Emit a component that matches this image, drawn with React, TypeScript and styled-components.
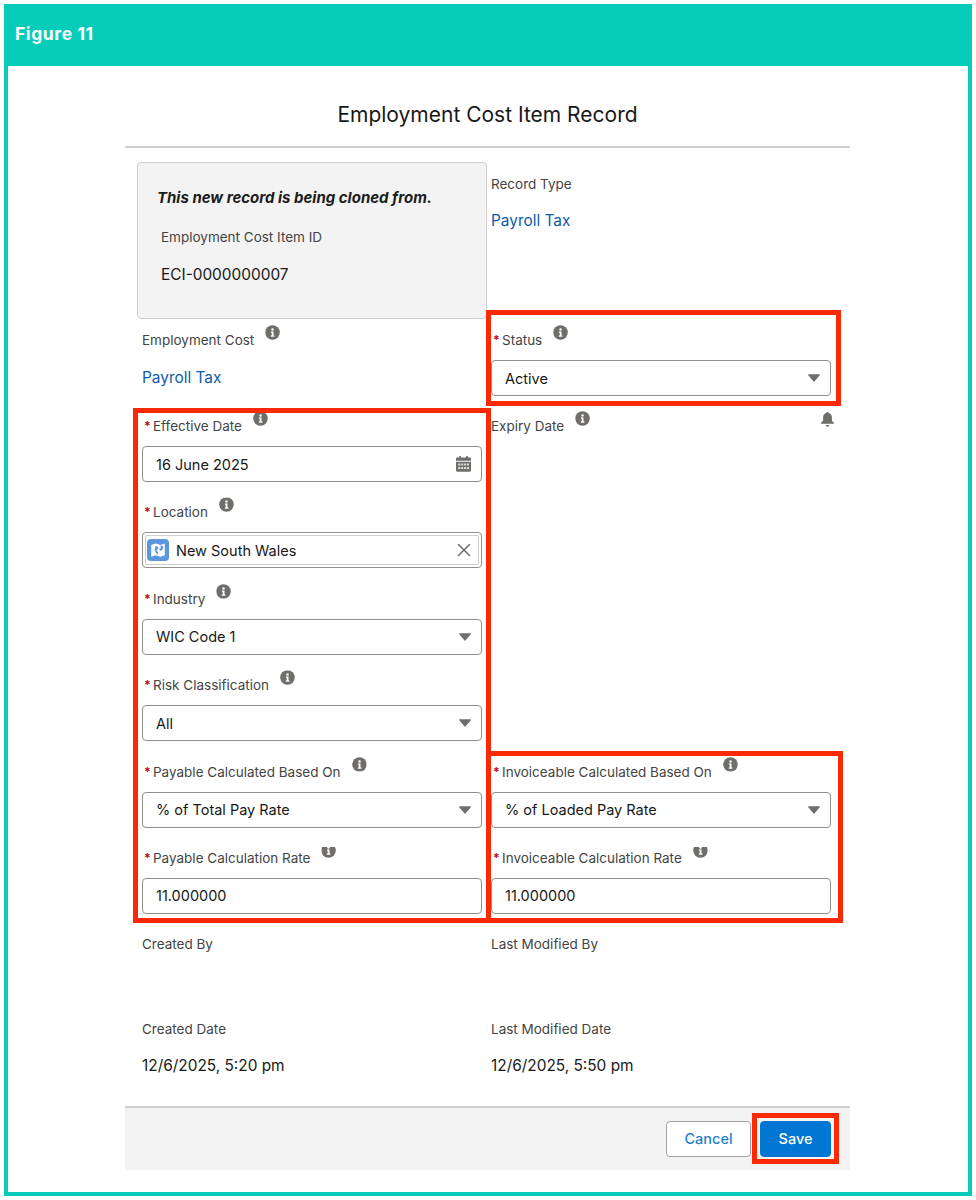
import React from 'react';
import styled, { createGlobalStyle } from 'styled-components';

const GlobalStyle = createGlobalStyle`
  html, body {
    margin: 0;
    background: #fff;
  }
  body {
    font-family: Inter, "Liberation Sans", sans-serif;
    color: #181818;
  }
`;

const Frame = styled.div`
  box-sizing: border-box;
  width: 968px;
  height: 1192px;
  margin: 4px;
  border: 4px solid #05cdb9;
  background: #fff;
`;

const Banner = styled.header`
  display: flex;
  align-items: center;
  height: 58px;
  padding: 0 0 8px 7px;
  box-sizing: border-box;
  background: #05cdb9;
  color: #fff;
  font-size: 17.5px;
  letter-spacing: 0.6px;
  font-weight: 700;
`;

const Dialog = styled.section`
  width: 725px;
  margin-left: 117px;
`;

const Title = styled.h1`
  margin: 0;
  padding: 34px 0 16px;
  border-bottom: 2px solid #d0d0d0;
  text-align: center;
  font-size: 21px;
  line-height: 30px;
  font-weight: 400;
  color: #181818;
`;

const Form = styled.div`
  display: grid;
  grid-template-columns: 350px 350px;
  padding-left: 12px;
`;

const Cell = styled.div<{ $side: 'left' | 'right'; $height?: number; $top?: number }>`
  display: flex;
  flex-direction: column;
  justify-content: space-between;
  box-sizing: border-box;
  padding: ${(p) => p.$top ?? 0}px ${(p) => (p.$side === 'left' ? '5px 0 5px' : '6px 0 4px')};
  height: ${(p) => (p.$height ? `${p.$height}px` : 'auto')};
`;

const CloneBox = styled.div`
  box-sizing: border-box;
  width: 350px;
  height: 157px;
  margin: 14px 0 0 -5px;
  padding: 25px 0 0 19px;
  border: 1px solid #cfcfcf;
  border-radius: 4px;
  background: #f3f3f3;
`;

const CloneNote = styled.div`
  font-size: 15px;
  line-height: 20px;
  font-weight: 700;
  font-style: italic;
  color: #1c1c1c;
`;

const CloneId = styled.div`
  margin: 19px 0 0 4px;
`;

const ReadOnly = styled.div<{ $top?: number }>`
  padding-top: ${(p) => p.$top ?? 0}px;
`;

const Label = styled.div`
  display: flex;
  align-items: flex-start;
  height: 20px;
  font-size: 13.5px;
  line-height: 20px;
  color: #444;
`;

const Required = styled.span`
  width: 9px;
  margin-left: 2px;
  color: #ba0517;
  font-weight: 700;
  font-size: 12px;
`;

const Value = styled.div<{ $gap?: number }>`
  margin-top: ${(p) => p.$gap ?? 17}px;
  font-size: 15.4px;
  line-height: 20px;
  color: #181818;
`;

const LinkValue = styled(Value)`
  color: #0b5cab;
`;

const InfoWrap = styled.span<{ $clip: number }>`
  display: inline-flex;
  width: 15px;
  height: 15px;
  margin: -5px 0 0 11px;
  clip-path: inset(${(p) => p.$clip}px 0 0 0);
`;

const Fields = styled.div`
  display: flex;
  flex-direction: column;
  gap: 20.4px;
`;

const Highlight = styled.div<{ $t: number; $r: number; $b: number; $l: number }>`
  position: relative;

  &::after {
    content: '';
    position: absolute;
    top: -${(p) => p.$t}px;
    right: -${(p) => p.$r}px;
    bottom: -${(p) => p.$b}px;
    left: -${(p) => p.$l}px;
    border: 5.5px solid #fb2a05;
    pointer-events: none;
  }
`;

const Control = styled.div`
  box-sizing: border-box;
  display: flex;
  align-items: center;
  justify-content: space-between;
  width: 340px;
  height: 36px;
  margin-top: 10px;
  padding: 0 10px 0 13px;
  border: 1px solid #8f8f8f;
  border-radius: 4px;
  background: #fff;
  font-size: 14.5px;
  color: #181818;
`;

const LookupControl = styled(Control)`
  padding: 2px;
`;

const LookupInner = styled.div`
  box-sizing: border-box;
  display: flex;
  align-items: center;
  width: 100%;
  height: 100%;
  padding: 0 7px 0 1px;
  border: 1px solid #cfcfcf;
  border-radius: 2px;
`;

const LookupText = styled.span`
  flex: 1;
  margin-left: 7px;
`;

const BellRow = styled.div`
  display: flex;
  align-items: flex-start;
  height: 20px;
`;

const BellWrap = styled.span`
  display: inline-flex;
  margin: -4px -4px 0 auto;
`;

const Footer = styled.footer`
  box-sizing: border-box;
  display: flex;
  align-items: center;
  justify-content: flex-end;
  gap: 9px;
  height: 64px;
  margin-top: 30px;
  padding-right: 19px;
  border-top: 2px solid #cfcfcf;
  background: #f3f3f3;
`;

const Button = styled.button<{ $primary?: boolean }>`
  box-sizing: border-box;
  height: 36px;
  width: ${(p) => (p.$primary ? '71px' : '85px')};
  padding: 0;
  border: 1px solid ${(p) => (p.$primary ? '#0176d3' : '#a3a3a3')};
  border-radius: 4px;
  background: ${(p) => (p.$primary ? '#0176d3' : '#fff')};
  color: ${(p) => (p.$primary ? '#fff' : '#1f7fcb')};
  font-family: inherit;
  font-size: 14.5px;
  font-weight: 500;
`;

function InfoIcon({ clip = 0 }: { clip?: number }) {
  return (
    <InfoWrap $clip={clip}>
      <svg width="15" height="15" viewBox="0 0 15 15">
        <circle cx="7.5" cy="7.5" r="7.3" fill="#706e6b" />
        <circle cx="7.5" cy="4.4" r="1.25" fill="#fff" />
        <path d="M5.9 6.5h2.6v4h.9v1.2H5.8v-1.2h.9V7.7h-.8z" fill="#fff" />
      </svg>
    </InfoWrap>
  );
}

function Caret() {
  return (
    <svg width="12" height="8" viewBox="0 0 12 8">
      <path d="M.6.3h10.8c.5 0 .7.5.4.9L6.4 7.4c-.2.3-.6.3-.8 0L.2 1.2C-.1.8.1.3.6.3z" fill="#706e6b" />
    </svg>
  );
}

function CalendarIcon() {
  return (
    <svg width="15" height="16" viewBox="0 0 15 16">
      <rect x="3" y="0" width="2" height="3" rx=".8" fill="#706e6b" />
      <rect x="10" y="0" width="2" height="3" rx=".8" fill="#706e6b" />
      <path d="M1.2 1.6h12.6c.7 0 1.2.5 1.2 1.2v2H0v-2c0-.7.5-1.2 1.2-1.2z" fill="#706e6b" />
      <path d="M0 5.8h15v8.8c0 .7-.5 1.2-1.2 1.2H1.2C.5 15.800 0 15.300 0 14.600z" fill="#706e6b" />
      <path
        d="M2.200 7.500h2.200v2H2.200zM5.200 7.500h2v2h-2zM8 7.500h2v2H8zM10.800 7.500H13v2h-2.200zM2.200 11h2.200v2H2.200zM5.200 11h2v2h-2zM8 11h2v2H8zM10.800 11H13v2h-2.200z"
        fill="#fff"
        opacity=".75"
      />
    </svg>
  );
}

function LocationBadge() {
  return (
    <svg width="22" height="22" viewBox="0 0 22 22">
      <rect width="22" height="22" rx="4" fill="#5b97de" />
      <path d="M4.200 6 8.600 4.500l4.800 1.500 4.400-1.500v11.800l-4.400 1.500-4.800-1.500-4.400 1.500z" fill="#fff" />
      <path
        d="M8.600 7c1.800.2 3 1.400 2.800 2.800l-2.200 1.500 1.800 1.600.1 2.800-2.200-2-1.400-2.800zM13.400 6.600l2.900.4-.7 3.600-2.300 1.300-1.400-1.500 2-1.400z"
        fill="#5b97de"
      />
    </svg>
  );
}

function ClearIcon() {
  return (
    <svg width="14" height="14" viewBox="0 0 14 14">
      <path d="M1.500 1.500l11 11M12.500 1.500l-11 11" stroke="#706e6b" strokeWidth="1.500" strokeLinecap="round" />
    </svg>
  );
}

function BellIcon() {
  return (
    <BellWrap>
      <svg width="15" height="15" viewBox="0 0 15 15">
        <path
          d="M7.500 0C8.100 0 8.600.4 8.700 1c2 .5 3.200 2.200 3.200 4.300v2.200c0 1.300.7 2.200 1.900 3 .6.400.4 1.300-.4 1.300H1.600c-.8 0-1-.9-.4-1.300 1.200-.8 1.900-1.700 1.900-3V5.300c0-2.100 1.200-3.800 3.200-4.300.1-.6.600-1 1.200-1z"
          fill="#706e6b"
        />
        <path d="M5.800 13h3.400c-.1.900-.8 1.700-1.700 1.700S5.900 13.900 5.800 13z" fill="#706e6b" />
      </svg>
    </BellWrap>
  );
}

function FieldLabel({ text, required = true, clip }: { text: string; required?: boolean; clip?: number }) {
  return (
    <Label>
      {required && <Required>*</Required>}
      {text}
      <InfoIcon clip={clip} />
    </Label>
  );
}

function Field({ label, clip, children }: { label: string; clip?: number; children: React.ReactNode }) {
  return (
    <div>
      <FieldLabel text={label} clip={clip} />
      {children}
    </div>
  );
}

function SelectField({ label, value, clip }: { label: string; value: string; clip?: number }) {
  return (
    <Field label={label} clip={clip}>
      <Control>
        {value}
        <Caret />
      </Control>
    </Field>
  );
}

function TextField({ label, value, clip }: { label: string; value: string; clip?: number }) {
  return (
    <Field label={label} clip={clip}>
      <Control>{value}</Control>
    </Field>
  );
}

export default function App() {
  return (
    <Frame>
      <GlobalStyle />
      <Banner>Figure 11</Banner>
      <Dialog>
        <Title>Employment Cost Item Record</Title>
        <Form>
          <Cell $side="left" $height={182}>
            <CloneBox>
              <CloneNote>This new record is being cloned from.</CloneNote>
              <CloneId>
                <Label>Employment Cost Item ID</Label>
                <Value $gap={18}>ECI-0000000007</Value>
              </CloneId>
            </CloneBox>
          </Cell>
          <Cell $side="right" $height={182}>
            <ReadOnly $top={26}>
              <Label>Record Type</Label>
              <LinkValue>Payroll Tax</LinkValue>
            </ReadOnly>
          </Cell>

          <Cell $side="left" $height={86}>
            <ReadOnly>
              <FieldLabel text="Employment Cost" required={false} />
              <LinkValue $gap={18}>Payroll Tax</LinkValue>
            </ReadOnly>
            <span />
          </Cell>
          <Cell $side="right" $height={86}>
            <Highlight $t={20} $r={10} $b={10} $l={5}>
              <SelectField label="Status" value="Active" />
            </Highlight>
            <span />
          </Cell>

          <Cell $side="left">
            <Highlight $t={8} $r={9} $b={9} $l={9}>
              <Fields>
                <Field label="Effective Date">
                  <Control>
                    16 June 2025
                    <CalendarIcon />
                  </Control>
                </Field>
                <Field label="Location">
                  <LookupControl>
                    <LookupInner>
                      <LocationBadge />
                      <LookupText>New South Wales</LookupText>
                      <ClearIcon />
                    </LookupInner>
                  </LookupControl>
                </Field>
                <SelectField label="Industry" value="WIC Code 1" />
                <SelectField label="Risk Classification" value="All" />
                <SelectField label="Payable Calculated Based On" value="% of Total Pay Rate" />
                <TextField label="Payable Calculation Rate" value="11.000000" clip={4} />
              </Fields>
            </Highlight>
          </Cell>
          <Cell $side="right">
            <BellRow>
              <FieldLabel text="Expiry Date" required={false} />
              <BellIcon />
            </BellRow>
            <Highlight $t={11} $r={12} $b={9} $l={5}>
              <Fields>
                <SelectField label="Invoiceable Calculated Based On" value="% of Loaded Pay Rate" />
                <TextField label="Invoiceable Calculation Rate" value="11.000000" clip={4} />
              </Fields>
            </Highlight>
          </Cell>

          <Cell $side="left" $height={125} $top={20}>
            <Label>Created By</Label>
            <Label>Created Date</Label>
          </Cell>
          <Cell $side="right" $height={125} $top={20}>
            <Label>Last Modified By</Label>
            <Label>Last Modified Date</Label>
          </Cell>

          <Cell $side="left">
            <Value>12/6/2025, 5:20 pm</Value>
          </Cell>
          <Cell $side="right">
            <Value>12/6/2025, 5:50 pm</Value>
          </Cell>
        </Form>
        <Footer>
          <Button>Cancel</Button>
          <Highlight $t={8} $r={8} $b={7} $l={8}>
            <Button $primary>Save</Button>
          </Highlight>
        </Footer>
      </Dialog>
    </Frame>
  );
}
